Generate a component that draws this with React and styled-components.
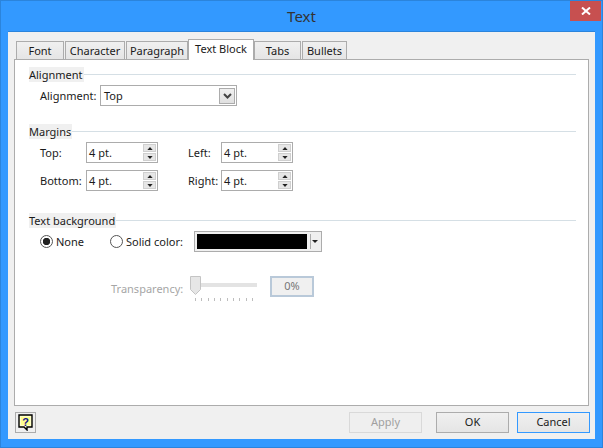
import React from "react";
import styled, { createGlobalStyle } from "styled-components";

const Global = createGlobalStyle`
  html, body { margin: 0; padding: 0; }
  body { font-family: "Noto Sans", "Open Sans", sans-serif; font-size: 11px; color: #1a1a1a; }
`;

const tabs = [
  { label: "Font", width: 48 },
  { label: "Character", width: 60 },
  { label: "Paragraph", width: 62 },
  { label: "Text Block", width: 66, active: true },
  { label: "Tabs", width: 47 },
  { label: "Bullets", width: 45 },
];

const Spinner = ({ value }) => (
  <SpinBox>
    <SpinValue>{value}</SpinValue>
    <SpinButtons>
      <SpinButton>
        <svg width="7" height="4" viewBox="0 0 7 4"><path d="M3.5 0L7 4H0z" fill="#222" /></svg>
      </SpinButton>
      <SpinButton>
        <svg width="7" height="4" viewBox="0 0 7 4"><path d="M0 0h7L3.5 4z" fill="#222" /></svg>
      </SpinButton>
    </SpinButtons>
  </SpinBox>
);

const HelpIcon = () => (
  <svg width="16" height="17" viewBox="0 0 16 17">
    <path d="M1 1h13v12H9v3L6 13H1z" fill="#ffffc8" stroke="#000" strokeWidth="1.4" />
    <path d="M3 3h9v8H3z" fill="#ffff66" opacity="0.6" />
    <text x="7.5" y="11.5" textAnchor="middle" fontFamily="Liberation Sans" fontWeight="700" fontSize="11" fill="#10108c">?</text>
  </svg>
);

export default function App() {
  return (
    <>
      <Global />
      <Window>
        <TitleBar>
          <Title>Text</Title>
          <CloseButton>
            <svg width="10" height="8" viewBox="0 0 10 8">
              <path d="M1 0.5L9 7.5M9 0.5L1 7.5" stroke="#fff" strokeWidth="2" />
            </svg>
          </CloseButton>
        </TitleBar>
        <Client>
          <TabStrip>
            {tabs.map((tab) => (
              <Tab key={tab.label} $active={tab.active} $width={tab.width}>
                {tab.label}
              </Tab>
            ))}
          </TabStrip>
          <Panel>
            <Section $height={57}>
              <Heading><span>Alignment</span></Heading>
              <Row $left={11}>
                <Label $width={60}>Alignment:</Label>
                <Combo>
                  <span>Top</span>
                  <ComboArrow>
                    <svg width="9" height="6" viewBox="0 0 9 6">
                      <path d="M1 1l3.5 3.5L8 1" fill="none" stroke="#444" strokeWidth="2" />
                    </svg>
                  </ComboArrow>
                </Combo>
              </Row>
            </Section>
            <Section $height={89}>
              <Heading><span>Margins</span></Heading>
              <MarginGrid>
                <Label>Top:</Label>
                <Spinner value="4 pt." />
                <Label>Left:</Label>
                <Spinner value="4 pt." />
                <Label>Bottom:</Label>
                <Spinner value="4 pt." />
                <Label>Right:</Label>
                <Spinner value="4 pt." />
              </MarginGrid>
            </Section>
            <Section>
              <Heading><span>Text background</span></Heading>
              <Row $left={11}>
                <Radio $checked />
                <RadioLabel $width={26}>None</RadioLabel>
                <Radio $gap={27} />
                <RadioLabel $width={58}>Solid color:</RadioLabel>
                <ColorPicker>
                  <Swatch />
                  <ColorArrow>
                    <svg width="6" height="3" viewBox="0 0 6 3"><path d="M0 0h6L3 3z" fill="#222" /></svg>
                  </ColorArrow>
                </ColorPicker>
              </Row>
              <TransparencyRow>
                <DimLabel>Transparency:</DimLabel>
                <Slider>
                  <Track />
                  <Thumb>
                    <svg width="11" height="19" viewBox="0 0 11 19">
                      <path d="M.5.5h10v13L5.500 18.500.5 13.500z" fill="#e6e6e6" stroke="#c4c4c4" />
                    </svg>
                  </Thumb>
                  <Ticks>
                    {Array.from({ length: 10 }).map((_, i) => <Tick key={i} />)}
                  </Ticks>
                </Slider>
                <PercentBox>0%</PercentBox>
              </TransparencyRow>
            </Section>
          </Panel>
          <Footer>
            <HelpButton><HelpIcon /></HelpButton>
            <FooterButtons>
              <DialogButton disabled>Apply</DialogButton>
              <DialogButton>OK</DialogButton>
              <DialogButton $primary>Cancel</DialogButton>
            </FooterButtons>
          </Footer>
        </Client>
      </Window>
    </>
  );
}

const Window = styled.div`
  width: 603px;
  height: 448px;
  box-sizing: border-box;
  background: #3399ff;
  border: 1px solid #2b84dc;
  padding: 0 7px 8px;
  display: flex;
  flex-direction: column;
`;
const TitleBar = styled.div`
  height: 30px;
  flex: none;
  display: flex;
  justify-content: center;
  position: relative;
`;
const Title = styled.div`
  font-size: 15px;
  line-height: 31px;
  color: #333;
`;
const CloseButton = styled.div`
  position: absolute;
  top: 0;
  right: -6px;
  width: 31px;
  height: 20px;
  background: #c75050;
  display: flex;
  align-items: center;
  justify-content: center;
`;
const Client = styled.div`
  flex: 1;
  background: #f0f0f0;
  border: 1px solid #2b84dc;
  border-width: 1px 0 0;
  padding: 7px 6px 0;
  display: flex;
  flex-direction: column;
  min-height: 0;
`;
const TabStrip = styled.div`
  display: flex;
  align-items: flex-end;
  height: 21px;
  padding-left: 2px;
  gap: 1px;
  position: relative;
  z-index: 1;
  margin-bottom: -1px;
`;
const Tab = styled.div`
  box-sizing: border-box;
  width: ${(p) => p.$width}px;
  margin: ${(p) => (p.$active ? "0 -1px 0 -1px" : "0")};
  height: ${(p) => (p.$active ? 21 : 19)}px;
  border: 1px solid #acacac;
  border-bottom: ${(p) => (p.$active ? "none" : "1px solid #acacac")};
  background: ${(p) => (p.$active ? "#fff" : "linear-gradient(#f0f0f0, #e5e5e5)")};
  text-align: center;
  line-height: ${(p) => (p.$active ? 17 : 18)}px;
  white-space: nowrap;
`;
const Panel = styled.div`
  box-sizing: border-box;
  height: 347px;
  background: #fff;
  border: 1px solid #acacac;
  padding: 7px 12px 0 14px;
`;
const Section = styled.div`
  height: ${(p) => (p.$height ? `${p.$height}px` : "auto")};
`;
const Heading = styled.div`
  height: 15px;
  display: flex;
  align-items: center;
  gap: 0;
  &::after {
    content: "";
    flex: 1;
    height: 1px;
    background: #d5dfe5;
  }
  span {
    background: #f0f0f0;
    line-height: 15px;
    white-space: nowrap;
    padding-right: 1px;
  }
`;
const Row = styled.div`
  display: flex;
  align-items: center;
  padding-left: ${(p) => p.$left || 0}px;
  margin-top: 3px;
`;
const Label = styled.div`
  width: ${(p) => (p.$width ? `${p.$width}px` : "auto")};
  white-space: nowrap;
`;
const Combo = styled.div`
  box-sizing: border-box;
  width: 137px;
  height: 21px;
  border: 1px solid #acacac;
  display: flex;
  align-items: center;
  justify-content: space-between;
  padding: 0 1px 0 3px;
`;
const ComboArrow = styled.div`
  width: 16px;
  height: 16px;
  box-sizing: border-box;
  border: 1px solid #acacac;
  background: linear-gradient(#f0f0f0, #e0e0e0);
  display: flex;
  align-items: center;
  justify-content: center;
`;
const MarginGrid = styled.div`
  display: grid;
  grid-template-columns: 46px 72px 28px 72px;
  column-gap: 0;
  justify-content: start;
  align-items: center;
  padding-left: 11px;
  margin-top: 3px;
  row-gap: 7px;
  & > :nth-child(4n + 3) { margin-left: 30px; }
  grid-template-columns: 46px 72px 63px 72px;
`;
const SpinBox = styled.div`
  box-sizing: border-box;
  width: 72px;
  height: 21px;
  border: 1px solid #acacac;
  display: flex;
  align-items: center;
  justify-content: space-between;
  padding: 0 1px 0 2px;
  background: #fff;
`;
const SpinValue = styled.span``;
const SpinButtons = styled.div`
  display: flex;
  flex-direction: column;
  gap: 1px;
`;
const SpinButton = styled.div`
  box-sizing: border-box;
  width: 13px;
  height: 8px;
  background: #e6e6e6;
  border: 1px solid #cfcfcf;
  display: flex;
  align-items: center;
  justify-content: center;
  svg { width: 6px; height: 3px; }
`;
const Radio = styled.div`
  box-sizing: border-box;
  width: 13px;
  height: 13px;
  flex: none;
  margin-left: ${(p) => p.$gap || 0}px;
  border-radius: 50%;
  border: 1px solid #555;
  background: ${(p) => (p.$checked ? "radial-gradient(circle, #222 0 3.4px, #fff 4px)" : "#fff")};
`;
const RadioLabel = styled.div`
  margin-left: 3px;
  width: ${(p) => p.$width}px;
  white-space: nowrap;
  margin-right: 1px;
`;
const ColorPicker = styled.div`
  box-sizing: border-box;
  margin-left: 9px;
  width: 128px;
  height: 21px;
  border: 1px solid #acacac;
  background: #f0f0f0;
  padding: 2px;
  display: flex;
`;
const Swatch = styled.div`
  width: 110px;
  background: #000;
`;
const ColorArrow = styled.div`
  flex: 1;
  border-left: 1px solid #acacac;
  margin-left: 3px;
  display: flex;
  align-items: center;
  justify-content: center;
`;
const TransparencyRow = styled.div`
  display: flex;
  align-items: center;
  padding-left: 82px;
  margin-top: 24px;
`;
const DimLabel = styled.div`
  width: 79px;
  color: #a6a6a6;
`;
const Slider = styled.div`
  width: 68px;
  height: 24px;
  position: relative;
`;
const Track = styled.div`
  position: absolute;
  left: 0;
  right: 1px;
  top: 7px;
  height: 4px;
  background: #e3e3e3;
`;
const Thumb = styled.div`
  position: absolute;
  left: 0;
  top: 0;
  height: 19px;
`;
const Ticks = styled.div`
  position: absolute;
  left: 5px;
  right: 5px;
  top: 22px;
  display: flex;
  justify-content: space-between;
`;
const Tick = styled.div`
  width: 1px;
  height: 3px;
  background: #bdbdbd;
`;
const PercentBox = styled.div`
  box-sizing: border-box;
  margin-left: 12px;
  width: 44px;
  height: 21px;
  border: 2px solid #b9c9d9;
  background: #f0f0f0;
  color: #777;
  text-align: center;
  line-height: 16px;
  margin-top: -3px;
`;
const Footer = styled.div`
  flex: 1;
  display: flex;
  justify-content: space-between;
  padding: 6px 0 0 1px;
`;
const HelpButton = styled.div`
  box-sizing: border-box;
  width: 21px;
  height: 21px;
  border: 1px solid #acacac;
  display: flex;
  align-items: center;
  justify-content: center;
`;
const FooterButtons = styled.div`
  display: flex;
  gap: 14px;
  margin-right: -1px;
  & > :last-child { margin-left: -6px; }
`;
const DialogButton = styled.div`
  box-sizing: border-box;
  width: 73px;
  height: 21px;
  text-align: center;
  line-height: 18px;
  border: 1px solid ${(p) => (p.$primary ? "#3399ff" : p.disabled ? "#d9d9d9" : "#acacac")};
  color: ${(p) => (p.disabled ? "#a0a0a0" : "#1a1a1a")};
  background: ${(p) => (p.disabled ? "#efefef" : "linear-gradient(#f0f0f0, #e5e5e5)")};
`;
